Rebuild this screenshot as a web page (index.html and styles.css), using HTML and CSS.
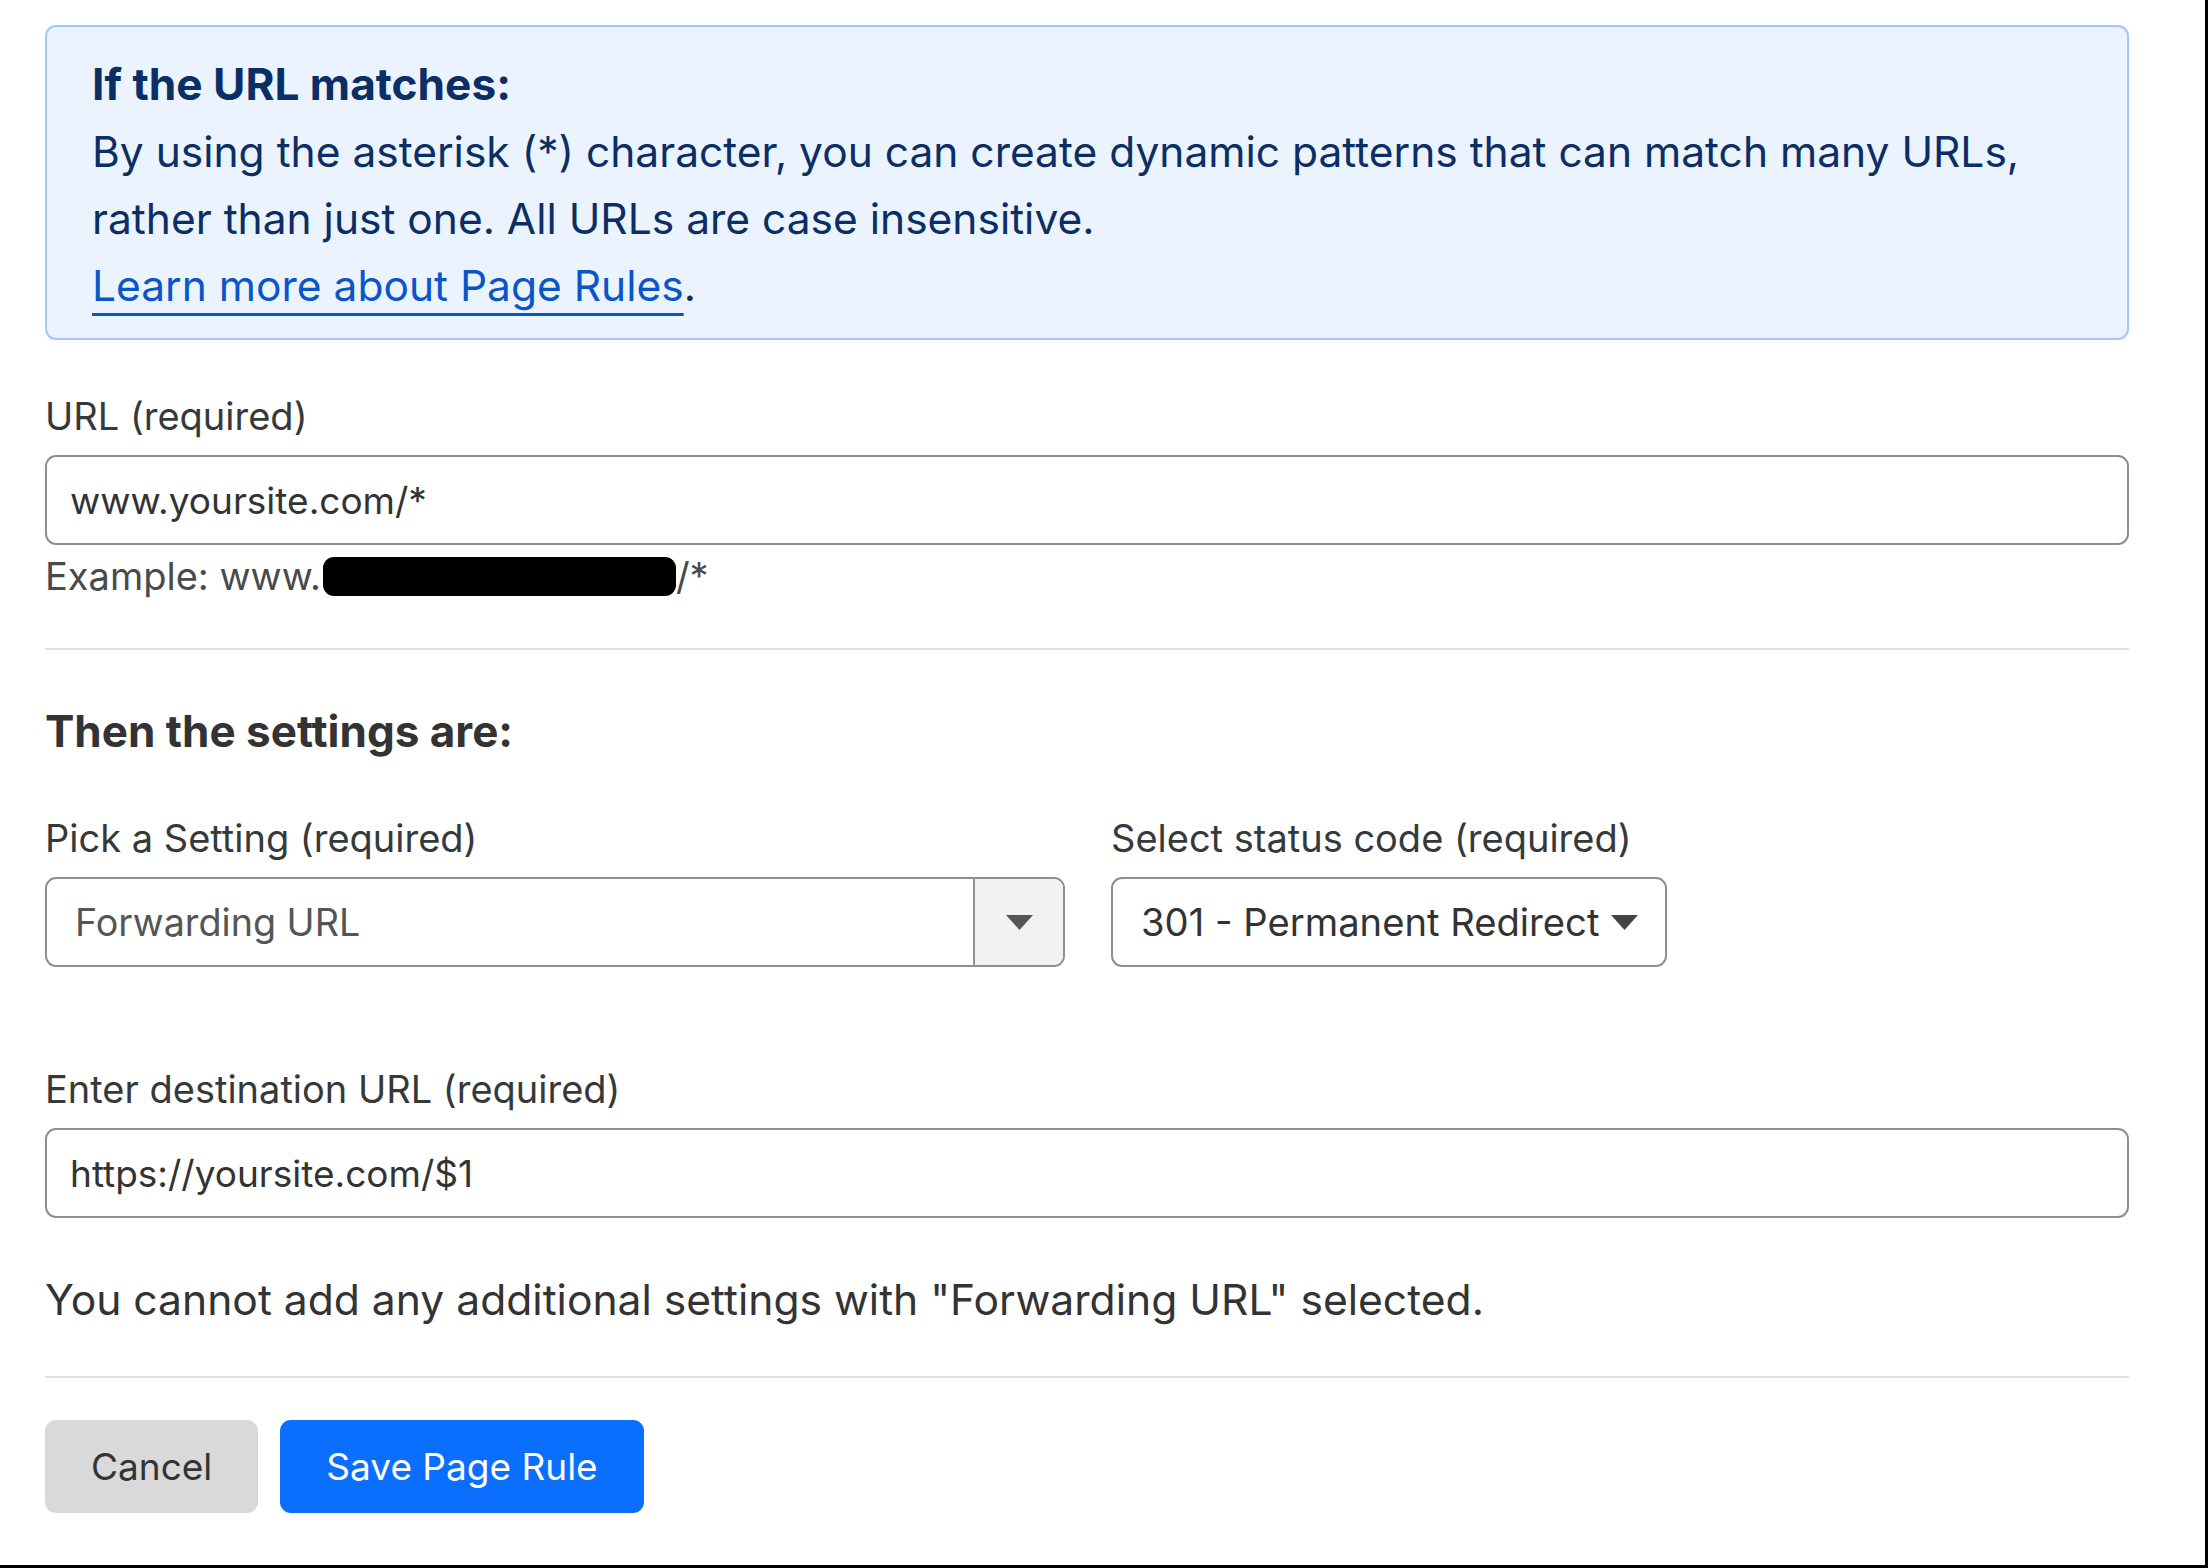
FILE: index.html
```html
<!DOCTYPE html>
<html lang="en">
<head>
<meta charset="utf-8">
<title>Page Rule</title>
<link rel="stylesheet" href="styles.css">
</head>
<body>
<div class="frame">
  <div class="content">
    <div class="notice">
      <div class="notice-title">If the URL matches:</div>
      <div class="notice-text">By using the asterisk (*) character, you can create dynamic patterns that can match many URLs, rather than just one. All URLs are case insensitive.</div>
      <div class="notice-text"><a class="link" href="#">Learn more about Page Rules</a>.</div>
    </div>

    <div class="field url">
      <label class="label">URL (required)</label>
      <div class="input">www.yoursite.com/*</div>
      <div class="hint">Example: www.<span class="redact"></span>/*</div>
    </div>

    <hr class="divider">

    <h3 class="section-title">Then the settings are:</h3>

    <div class="selects">
      <div class="field setting">
        <label class="label">Pick a Setting (required)</label>
        <div class="combo">
          <div class="combo-value">Forwarding URL</div>
          <div class="combo-toggle">
            <svg width="27" height="15" viewBox="0 0 27 15"><path d="M0 0H27L13.5 15Z" fill="#555"/></svg>
          </div>
        </div>
      </div>
      <div class="field status">
        <label class="label">Select status code (required)</label>
        <div class="select">
          <span>301 - Permanent Redirect</span>
          <svg width="27" height="15" viewBox="0 0 27 15"><path d="M0 0H27L13.5 15Z" fill="#444"/></svg>
        </div>
      </div>
    </div>

    <div class="field dest">
      <label class="label">Enter destination URL (required)</label>
      <div class="input">https://yoursite.com/$1</div>
    </div>

    <p class="note">You cannot add any additional settings with "Forwarding URL" selected.</p>

    <hr class="divider bottom">

    <div class="actions">
      <button class="btn btn-cancel">Cancel</button>
      <button class="btn btn-save">Save Page Rule</button>
    </div>
  </div>
</div>
</body>
</html>
```
FILE: styles.css
```css
html, body {
  margin: 0;
  padding: 0;
  background: #fff;
}
body {
  font-family: Inter, "Noto Sans", sans-serif;
  color: #333;
}
.frame {
  width: 2208px;
  height: 1568px;
  box-sizing: border-box;
  border-right: 3px solid #000;
  border-bottom: 3px solid #000;
  padding: 25px 0 0 45px;
}
.content {
  width: 2084px;
}
.notice {
  background: #ebf3fe;
  border: 2px solid #a2c7fa;
  border-radius: 11px;
  padding: 24px 45px 19px;
  color: #0b2e64;
  font-size: 42.5px;
  line-height: 67px;
}
.notice-title {
  font-weight: 700;
  font-size: 44.2px;
}
.link {
  color: #0a55c8;
  text-decoration: underline;
  text-decoration-thickness: 3px;
  text-underline-offset: 12px;
}
.field {
  display: flex;
  flex-direction: column;
}
.label {
  font-size: 38px;
  line-height: 56px;
  padding-top: 2px;
  color: #36393a;
  margin-bottom: 11px;
}
.url {
  margin-top: 46px;
}
.input {
  height: 90px;
  box-sizing: border-box;
  border: 2px solid #8f8f8f;
  border-radius: 11px;
  display: flex;
  align-items: center;
  padding-left: 23px;
  font-size: 37px;
  color: #333;
}
.hint {
  font-size: 38px;
  line-height: 56px;
  color: #4a4a4a;
  margin-top: 3px;
  display: flex;
  align-items: center;
}
.redact {
  display: inline-block;
  width: 353px;
  height: 39px;
  margin-left: 2px;
  background: #000;
  border-radius: 11px;
}
.divider {
  border: 0;
  height: 2px;
  background: #e2e2e2;
  margin: 44px 0 0;
}
.section-title {
  margin: 50px 0 0;
  font-size: 44px;
  line-height: 62px;
  font-weight: 700;
  color: #333;
}
.selects {
  display: flex;
  gap: 46px;
  margin-top: 46px;
}
.setting {
  width: 1020px;
}
.status {
  width: 556px;
}
.combo {
  height: 90px;
  box-sizing: border-box;
  border: 2px solid #8f8f8f;
  border-radius: 11px;
  display: flex;
  overflow: hidden;
}
.combo-value {
  flex: 1;
  display: flex;
  align-items: center;
  padding-left: 28px;
  font-size: 37.7px;
  color: #555;
}
.combo-toggle {
  width: 88px;
  border-left: 2px solid #8f8f8f;
  background: #f2f2f2;
  display: flex;
  align-items: center;
  justify-content: center;
}
.select {
  height: 90px;
  box-sizing: border-box;
  border: 2px solid #8f8f8f;
  border-radius: 11px;
  display: flex;
  align-items: center;
  justify-content: space-between;
  padding: 0 27px 0 28px;
  font-size: 38.2px;
  color: #333;
  white-space: nowrap;
}
.dest {
  margin-top: 92px;
}
.note {
  margin: 48px 0 0;
  font-size: 42.6px;
  line-height: 67px;
  color: #333;
}
.divider.bottom {
  margin-top: 43px;
}
.actions {
  display: flex;
  gap: 22px;
  margin-top: 42px;
}
.btn {
  height: 93px;
  border: 0;
  border-radius: 11px;
  font-family: inherit;
  font-size: 37px;
  padding: 0 46px;
  white-space: nowrap;
}
.btn-cancel {
  background: #d9d9d9;
  color: #333;
}
.btn-save {
  background: #0a6eff;
  color: #fff;
}
```
